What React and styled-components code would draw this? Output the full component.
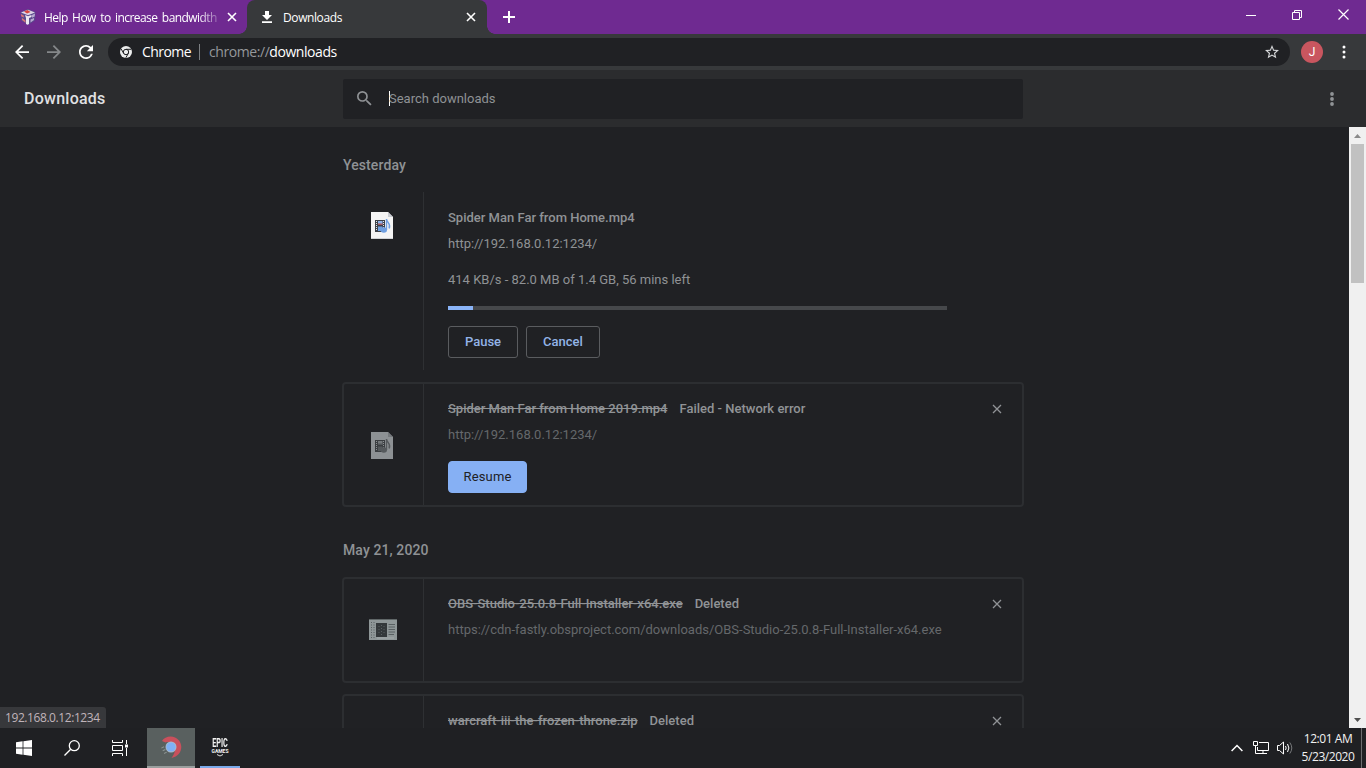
import React from 'react'
import styled, { createGlobalStyle } from 'styled-components'

const GlobalStyle = createGlobalStyle`
  * {
    box-sizing: border-box;
  }
  body {
    margin: 0;
    overflow: hidden;
    background: #202124;
    font-family: Roboto, "Liberation Sans", sans-serif;
  }
  button {
    font-family: inherit;
    padding: 0;
    border: none;
    background: none;
  }
  svg {
    display: block;
    flex-shrink: 0;
  }
`

const Screen = styled.div`
  width: 1366px;
  height: 768px;
  display: flex;
  flex-direction: column;
  overflow: hidden;
`

/* ---- window ---- */

const TabStrip = styled.div`
  height: 34px;
  flex-shrink: 0;
  display: flex;
  background: #6f2a91;
  font-family: "Open Sans", "Noto Sans", sans-serif;
  font-size: 12px;
  color: #fff;
`
const Tab = styled.div`
  position: relative;
  width: ${p => p.$width}px;
  padding: 0 9px 0 ${p => p.$left}px;
  display: flex;
  align-items: center;
  background: ${p => (p.$active ? '#37393b' : 'transparent')};
  border-radius: 8px 8px 0 0;
  ${p => p.$active && `
    &::before, &::after {
      content: '';
      position: absolute;
      bottom: 0;
      width: 8px;
      height: 8px;
    }
    &::before {
      left: -8px;
      background: radial-gradient(circle at 0 0, transparent 7.5px, #37393b 8px);
    }
    &::after {
      right: -8px;
      background: radial-gradient(circle at 100% 0, transparent 7.5px, #37393b 8px);
    }
  `}
`
const TabTitle = styled.span`
  width: ${p => p.$width}px;
  margin-left: ${p => p.$gap}px;
  margin-right: auto;
  white-space: nowrap;
  letter-spacing: ${p => p.$spacing || 0}px;
  ${p => p.$fade && `
    word-spacing: 1.8px;
    mask-image: linear-gradient(90deg, #000 88%, rgba(0, 0, 0, 0.2));
  `}
`
const IconButton = styled.button`
  width: ${p => p.$size || 16}px;
  height: ${p => p.$size || 16}px;
  display: flex;
  align-items: center;
  justify-content: center;
  color: ${p => p.$color || '#fff'};
`
const NewTab = styled(IconButton)`
  margin: 9px 0 0 14px;
`
const WindowButtons = styled.div`
  margin-left: auto;
  height: 29px;
  display: flex;
`
const WindowButton = styled.button`
  width: 46px;
  display: flex;
  align-items: center;
  justify-content: center;
`

const Toolbar = styled.div`
  height: 36px;
  flex-shrink: 0;
  display: flex;
  align-items: center;
  padding: 0 13px 0 15px;
  background: #37393b;
`
const NavButtons = styled.div`
  display: flex;
  gap: 18px;
`
const Omnibox = styled.div`
  width: 1182px;
  height: 28px;
  flex-shrink: 0;
  margin-left: 15px;
  padding: 0 11px 0 12px;
  display: flex;
  align-items: center;
  background: #202124;
  border-radius: 14px;
  color: #fff;
  font-family: "Open Sans", "Noto Sans", sans-serif;
  font-size: 14px;
  line-height: 20px;
`
const SiteName = styled.span`
  margin-left: 10px;
  letter-spacing: -0.55px;
`
const SiteDivider = styled.span`
  width: 1px;
  height: 16px;
  margin: 0 9px 0 8px;
  background: #7d8083;
`
const Url = styled.span`
  margin-right: auto;
  letter-spacing: -0.44px;
  em {
    font-style: normal;
    color: #95989b;
  }
`
const Avatar = styled.div`
  width: 22px;
  height: 22px;
  flex-shrink: 0;
  margin: 0 13px 0 11px;
  display: flex;
  align-items: center;
  justify-content: center;
  border-radius: 50%;
  background: #c9565f;
  color: #fff;
  font-size: 12px;
`

/* ---- downloads page ---- */

const PageHeader = styled.header`
  height: 57px;
  flex-shrink: 0;
  display: flex;
  align-items: center;
  background: #2b2c2e;
`
const PageTitle = styled.h1`
  width: 343px;
  margin: 0;
  padding-left: 24px;
  font-size: 16px;
  font-weight: 500;
  letter-spacing: 0.25px;
  color: #e0e1e3;
`
const SearchField = styled.div`
  width: 680px;
  height: 40px;
  margin-right: auto;
  padding-left: 14px;
  display: flex;
  align-items: center;
  border-radius: 2px;
  background: #202124;
  color: #8f9295;
  font-size: 13px;
`
const Caret = styled.span`
  width: 1px;
  height: 15px;
  margin-left: 17px;
  margin-right: -1px;
  background: #fff;
`
const MenuButton = styled(IconButton)`
  margin-right: 26px;
`

const PageBody = styled.div`
  position: relative;
  height: 601px;
  flex-shrink: 0;
  display: flex;
  justify-content: space-between;
  overflow: hidden;
  background: #202124;
`
const List = styled.main`
  width: 682px;
  margin-left: 342px;
`
const DateHeading = styled.h2`
  margin: ${p => p.$top}px 0 17px 1px;
  font-size: 14px;
  font-weight: 500;
  line-height: 20px;
  letter-spacing: 0.1px;
  color: #8f9295;
`
const Card = styled.section`
  height: ${p => p.$height}px;
  margin-bottom: ${p => p.$gap || 0}px;
  display: flex;
  border: ${p => (p.$plain ? '0 solid transparent' : '2px solid #2c2e31')};
  border-left-width: 2px;
  border-radius: 4px;
`
const IconCell = styled.div`
  width: 80px;
  display: flex;
  align-items: ${p => (p.$top ? 'flex-start' : 'center')};
  justify-content: center;
  padding: ${p => p.$top || 0}px ${p => p.$right || 3}px 0 0;
  border-right: 1px solid #2e3033;
`
const Details = styled.div`
  flex: 1;
  padding: ${p => p.$top || 15}px 16px 0 24px;
  font-size: 13px;
  line-height: 20px;
  color: #8f9295;
`
const TitleRow = styled.div`
  height: 20px;
  display: flex;
  align-items: center;
  font-weight: 500;
  color: #909396;
`
const FileName = styled.span`
  text-decoration: ${p => (p.$gone ? 'line-through' : 'none')};
`
const Tag = styled.span`
  margin-left: 12px;
`
const Remove = styled(IconButton)`
  margin-left: auto;
`
const Line = styled.div`
  margin-top: ${p => p.$top || 6}px;
  color: ${p => (p.$dim ? '#65686b' : '#8f9295')};
`
const Progress = styled.div`
  width: 499px;
  height: 4px;
  margin-top: 16px;
  background: #46484b;
`
const ProgressFill = styled.div`
  height: 4px;
  background: #8ab4f8;
`
const Actions = styled.div`
  display: flex;
  gap: 8px;
  margin-top: 16px;
`
const ActionButton = styled.button`
  width: ${p => p.$width}px;
  height: 32px;
  padding-bottom: 2px;
  border: 1px solid ${p => (p.$filled ? '#86b0f4' : '#5a5c5f')};
  border-radius: ${p => (p.$filled ? 4 : 3)}px;
  background: ${p => (p.$filled ? '#86b0f4' : 'transparent')};
  color: ${p => (p.$filled ? '#202124' : '#93b4e8')};
  font-size: 13px;
  font-weight: ${p => (p.$filled ? 400 : 500)};
  letter-spacing: ${p => (p.$filled ? 0.15 : 0)}px;
`

const Scrollbar = styled.div`
  width: 17px;
  display: flex;
  flex-direction: column;
  align-items: center;
  background: #f0f0f0;
`
const ScrollArrow = styled.div`
  height: 17px;
  display: flex;
  align-items: center;
`
const Thumb = styled.div`
  width: 13px;
  height: 139px;
  margin-bottom: auto;
  background: #c1c1c1;
`
const StatusBubble = styled.div`
  position: absolute;
  left: 0;
  bottom: 0;
  width: 106px;
  height: 21px;
  padding-left: 5px;
  background: #37383b;
  border-radius: 0 3px 0 0;
  color: #c0b4ba;
  font-family: "Open Sans", "Noto Sans", sans-serif;
  font-size: 12px;
  line-height: 21px;
  letter-spacing: -0.42px;
`

/* ---- taskbar ---- */

const Taskbar = styled.footer`
  height: 40px;
  flex-shrink: 0;
  display: flex;
  background: #1f2023;
  color: #f2f2f2;
`
const TaskItem = styled.div`
  width: ${p => p.$width || 48}px;
  height: 40px;
  margin-left: ${p => p.$gap || 0}px;
  display: flex;
  flex-direction: column;
  align-items: center;
  justify-content: center;
  background: ${p => (p.$active ? '#59605f' : 'transparent')};
  border-bottom: ${p => (p.$bar ? `2px solid ${p.$bar}` : 'none')};
`
const EpicName = styled.span`
  font-size: 13px;
  font-weight: 700;
  line-height: 11px;
  transform: scaleX(0.56);
`
const EpicGames = styled.span`
  font-size: 5px;
  font-weight: 700;
  line-height: 6px;
`
const Tray = styled.div`
  margin-left: auto;
  display: flex;
  align-items: center;
`
const Clock = styled.div`
  width: 58px;
  height: 40px;
  margin: 0 4px 0 5px;
  padding-top: 2px;
  font-family: "Open Sans", "Noto Sans", sans-serif;
  font-size: 12px;
  line-height: 18px;
  letter-spacing: -0.45px;
  text-align: center;
  white-space: nowrap;
`
const ShowDesktop = styled.div`
  width: 5px;
  height: 40px;
  border-left: 1px solid #6c6d6f;
`

const Close = ({ size = 10, width = 1.6 }) => (
  <svg width={size} height={size} viewBox="0 0 10 10" stroke="currentColor" strokeWidth={width}>
    <path d="M1 1l8 8M9 1L1 9" />
  </svg>
)

const Dots = ({ r = 1.5, gap = 5 }) => (
  <svg width="16" height="16" viewBox="0 0 16 16" fill="currentColor">
    <circle cx="8" cy={8 - gap} r={r} />
    <circle cx="8" cy="8" r={r} />
    <circle cx="8" cy={8 + gap} r={r} />
  </svg>
)

const Nav = ({ d, color = '#fff' }) => (
  <svg width="14" height="14" viewBox="4 4 16 16" fill={color}>
    <path d={d} />
  </svg>
)

const Favicon = () => (
  <svg width="16" height="16" viewBox="0 0 16 16">
    <path d="M8 0l7.5 3L15 11.5 8 16 1 11.500.5 3z" fill="#5b4a8c" />
    <path d="M1 3.500l7-2.800 7 2.800-7 2.800z" fill="#ded4e6" />
    <path d="M4 2.500l3.500-1.500 3 2L7 4.500z" fill="#d6453f" />
    <path d="M.8 5l3 1.500v2l-2.500-1zM2 9l3.500 2.500v2.300L2 11z" fill="#d9737a" />
    <path d="M5 6l3 1.200L11.500 6v2L9 9v6l-1.500.8L6 15V9z" fill="#eee8f2" />
    <path d="M12 6l3-1.500-.3 3-2.700 1.200zM10.500 10.500L14 9v2l-3.500 2.400z" fill="#b8a8d2" />
  </svg>
)

const ChromeMark = () => (
  <svg width="12" height="12" viewBox="0 0 12 12">
    <circle cx="6" cy="6" r="6" fill="#eceded" />
    <circle cx="6" cy="6" r="2.700" fill="none" stroke="#202124" strokeWidth="1" />
    <path d="M6 3.300h5.200M3.660 7.350L1.100 2.900M8.340 7.350L5.800 11.800" stroke="#202124" strokeWidth="1" />
  </svg>
)

const VideoFile = ({ faded }) => {
  const ink = faded ? '#3b3e41' : '#3d4148'
  const accent = faded ? '#55595c' : '#6f9fe0'
  return (
    <svg width="22" height="27" viewBox="0 0 22 27">
      <path d="M0 0h17l5 5v22H0z" fill={faded ? '#8d9194' : '#f4f4f4'} />
      <path d="M17 0l5 5h-5z" fill={faded ? '#75797c' : '#c9ccd2'} />
      {!faded && <path d="M0 26.500h22" stroke="#d0d2d4" />}
      <path d="M4 8h10v12H4z" fill={ink} />
      <path d="M5.500 9v10M12.500 9v10" stroke={faded ? '#8d9194' : '#e8e8e8'} strokeDasharray="1 1" />
      <path d="M7 9h4.500v4H7z" fill={faded ? '#74787b' : '#8fb1e6'} />
      <path d="M7 11.500h4.500V13H7z" fill={faded ? '#53575a' : '#a8595f'} />
      <path d="M7 14.500h4.500V19H7z" fill={accent} />
      <ellipse cx="12.800" cy="18" rx="3.200" ry="2.800" fill={accent} />
      <path d="M15.500 18V7c0 3.500 5 4.500 2.600 9.500" fill="none" stroke={accent} strokeWidth="1.400" />
    </svg>
  )
}

const ExeFile = () => (
  <svg width="28" height="21" viewBox="0 0 28 21">
    <path d="M0 0h28v21H0z" fill="#8f9798" />
    <path d="M0 .5h28" stroke="#606768" />
    <path d="M7 4h11v14H7z" fill="#34393b" />
    <path d="M2.500 3v16M5 3v16" stroke="#596062" strokeDasharray="1 1.500" />
    <path d="M19.500 5.500H26M19.500 8H26M19.500 10.500H26M19.500 13H26M19.500 15.500H25" stroke="#596062" />
    <path d="M10 7v9M12.500 6v10M15 7v9" stroke="#596062" strokeDasharray="1 2" />
    <path d="M8 19h17" stroke="#a4abac" />
  </svg>
)

const RemoveButton = () => (
  <Remove $size={18} $color="#909396"><Close size={10} width={1.3} /></Remove>
)

const Arrow = ({ down, color }) => (
  <svg width="7" height="4" viewBox="0 0 7 4" fill={color}>
    <path d={down ? 'M0 0h7L3.500 4z' : 'M0 4h7L3.500 0z'} />
  </svg>
)

const Browser = () => (
  <>
    <TabStrip>
      <Tab $width={247} $left={20}>
        <Favicon />
        <TabTitle $width={175} $gap={8} $spacing={-0.55} $fade>Help How to increase bandwidth</TabTitle>
        <IconButton $size={12}><Close /></IconButton>
      </Tab>
      <Tab $active $width={240} $left={14}>
        <svg width="12" height="12" viewBox="0 0 12 12" fill="#fff">
          <path d="M4 0h4v4h3L6 9 1 4h3zM1 10.300h10V12H1z" />
        </svg>
        <TabTitle $width={80} $gap={10} $spacing={-0.4}>Downloads</TabTitle>
        <IconButton $size={14}><Close /></IconButton>
      </Tab>
      <NewTab>
        <svg width="12" height="12" viewBox="0 0 12 12" stroke="#fff" strokeWidth="2"><path d="M6 0v12M0 6h12" /></svg>
      </NewTab>
      <WindowButtons>
        <WindowButton>
          <svg width="10" height="10" viewBox="0 0 10 10" stroke="#fff"><path d="M0 5.500h10" /></svg>
        </WindowButton>
        <WindowButton>
          <svg width="10" height="10" viewBox="0 0 10 10" stroke="#fff" fill="none">
            <path d="M.5 2.500h7v7h-7zM2.500 2.500v-2h7v7h-2" />
          </svg>
        </WindowButton>
        <WindowButton>
          <svg width="11" height="11" viewBox="0 0 11 11" stroke="#fff" strokeWidth="1.200"><path d="M.5.5l10 10M10.500.5l-10 10" /></svg>
        </WindowButton>
      </WindowButtons>
    </TabStrip>
    <Toolbar>
      <NavButtons>
        <Nav d="M20 11H7.830l5.590-5.590L12 4l-8 8 8 8 1.410-1.410L7.830 13H20v-2z" />
        <Nav color="#85888a" d="M12 4l-1.410 1.410L16.170 11H4v2h12.170l-5.580 5.590L12 20l8-8z" />
        <Nav d="M17.650 6.350A7.958 7.958 0 0012 4c-4.420 0-7.990 3.580-7.990 8s3.570 8 7.990 8c3.730 0 6.840-2.550 7.730-6h-2.080A5.990 5.990 0 0112 18c-3.310 0-6-2.690-6-6s2.690-6 6-6c1.660 0 3.140.69 4.220 1.780L13 11h7V4l-2.350 2.350z" />
      </NavButtons>
      <Omnibox>
        <ChromeMark />
        <SiteName>Chrome</SiteName>
        <SiteDivider />
        <Url><em>chrome://</em>downloads</Url>
        <svg width="14" height="14" viewBox="2 2 20 20" fill="#d5d7d9">
          <path d="M22 9.240l-7.190-.62L12 2 9.190 8.630 2 9.240l5.460 4.730L5.820 21 12 17.270 18.180 21l-1.630-7.030L22 9.240zM12 15.400l-3.760 2.270 1-4.280-3.320-2.880 4.380-.38L12 6.100l1.710 4.040 4.380.38-3.320 2.880 1 4.280L12 15.400z" />
        </svg>
      </Omnibox>
      <Avatar>J</Avatar>
      <IconButton><Dots /></IconButton>
    </Toolbar>
  </>
)

const Downloads = () => (
  <>
    <PageHeader>
      <PageTitle>Downloads</PageTitle>
      <SearchField>
        <svg width="15" height="15" viewBox="3 3 18 18" fill="#8f9295">
          <path d="M15.500 14h-.79l-.28-.27A6.471 6.471 0 0016 9.500 6.500 6.500 0 109.500 16c1.610 0 3.090-.59 4.230-1.570l.27.28v.79l5 4.990L20.490 19l-4.990-5zm-6 0C7.010 14 5 11.990 5 9.500S7.010 5 9.500 5 14 7.010 14 9.500 11.990 14 9.500 14z" />
        </svg>
        <Caret />
        Search downloads
      </SearchField>
      <MenuButton $color="#909396"><Dots r={1.9} /></MenuButton>
    </PageHeader>
    <PageBody>
      <List>
        <DateHeading $top={28}>Yesterday</DateHeading>
        <Card $plain $height={178} $gap={12}>
          <IconCell $top={20}><VideoFile /></IconCell>
          <Details $top={16}>
            <TitleRow><FileName>Spider Man Far from Home.mp4</FileName></TitleRow>
            <Line>http://192.168.0.12:1234/</Line>
            <Line $top={16}>414 KB/s - 82.0 MB of 1.4 GB, 56 mins left</Line>
            <Progress><ProgressFill style={{ width: '5%' }} /></Progress>
            <Actions>
              <ActionButton $width={70}>Pause</ActionButton>
              <ActionButton $width={74}>Cancel</ActionButton>
            </Actions>
          </Details>
        </Card>
        <Card $height={125}>
          <IconCell $top={48}><VideoFile faded /></IconCell>
          <Details>
            <TitleRow>
              <FileName $gone>Spider Man Far from Home 2019.mp4</FileName>
              <Tag>Failed - Network error</Tag>
              <RemoveButton />
            </TitleRow>
            <Line $dim>http://192.168.0.12:1234/</Line>
            <Actions>
              <ActionButton $filled $width={79}>Resume</ActionButton>
            </Actions>
          </Details>
        </Card>
        <DateHeading $top={33}>May 21, 2020</DateHeading>
        <Card $height={106} $gap={11}>
          <IconCell $top={40} $right={1}><ExeFile /></IconCell>
          <Details>
            <TitleRow>
              <FileName $gone>OBS-Studio-25.0.8-Full-Installer-x64.exe</FileName>
              <Tag>Deleted</Tag>
              <RemoveButton />
            </TitleRow>
            <Line $dim>https://cdn-fastly.obsproject.com/downloads/OBS-Studio-25.0.8-Full-Installer-x64.exe</Line>
          </Details>
        </Card>
        <Card $height={106}>
          <IconCell />
          <Details>
            <TitleRow>
              <FileName $gone>warcraft-iii-the-frozen-throne.zip</FileName>
              <Tag>Deleted</Tag>
              <RemoveButton />
            </TitleRow>
          </Details>
        </Card>
      </List>
      <Scrollbar>
        <ScrollArrow><Arrow color="#8a8a8a" /></ScrollArrow>
        <Thumb />
        <ScrollArrow><Arrow down color="#505050" /></ScrollArrow>
      </Scrollbar>
      <StatusBubble>192.168.0.12:1234</StatusBubble>
    </PageBody>
  </>
)

const WindowsTaskbar = () => (
  <Taskbar>
    <TaskItem>
      <svg width="16" height="16" viewBox="0 0 16 16" fill="#fff">
        <path d="M0 2.200L6.600 1.300v6.300H0zM7.400 1.200L16 0v7.600H7.400zM0 8.400h6.600v6.300L0 13.800zM7.400 8.400H16V16l-8.600-1.200z" />
      </svg>
    </TaskItem>
    <TaskItem>
      <svg width="16" height="16" viewBox="0 0 16 16" fill="none" stroke="#fff" strokeWidth="1.300">
        <circle cx="10.300" cy="5.700" r="5" />
        <path d="M6.700 9.300L.5 15.500" />
      </svg>
    </TaskItem>
    <TaskItem>
      <svg width="16" height="16" viewBox="0 0 16 16" fill="none" stroke="#fff">
        <path d="M.5 0v2.500h10V0M.5 5.500h10v5H.5zM.5 16v-2.500h10V16M14.500 0v4M14.500 8v8" />
        <path d="M13 4.500h3v3h-3z" fill="#fff" stroke="none" />
      </svg>
    </TaskItem>
    <TaskItem $active $gap={3} $bar="#9a9f9e">
      <svg width="24" height="24" viewBox="0 0 24 24">
        <path d="M3 6C6 1 15-.5 20 5.500c5 6.500 1.500 16-7.500 17.500 3-4 4-7 3-11-1-4-5-6-9-4.500z" fill="#c9505c" />
        <circle cx="12" cy="12" r="5.500" fill="#a9b9c9" />
        <circle cx="12" cy="12" r="4.600" fill="#7fb0f5" />
        <path d="M3.500 12l4 8" stroke="#8b9391" strokeWidth="3" strokeDasharray="1 2" />
      </svg>
    </TaskItem>
    <TaskItem $width={40} $gap={5} $bar="#7aa9ea">
      <EpicName>EPIC</EpicName>
      <EpicGames>GAMES</EpicGames>
      <svg width="6" height="3" viewBox="0 0 6 3" fill="none" stroke="#ddd"><path d="M0 .5l3 1.500 3-1.500" /></svg>
    </TaskItem>
    <Tray>
      <svg width="12" height="8" viewBox="0 0 12 8" fill="none" stroke="#fff" strokeWidth="1.500"><path d="M.6 7L6 1.500 11.400 7" /></svg>
      <svg width="32" height="16" viewBox="-10 0 32 16" fill="none" stroke="#fff">
        <path d="M6 2.500h9.500v8H4.500V7M10 10.500v3M5 13.500h9M.5 1.500h4v4h-4zM2.500 5.500v8H5" />
      </svg>
      <svg width="19" height="16" viewBox="-2 0 19 16" fill="none" stroke="#fff">
        <path d="M.5 5.500h2L6.500 2v12l-4-3.500h-2zM8.500 6q1.300 2 0 4M10.500 4q2.800 4 0 8" />
        <path d="M12.800 2.500q4 5.500 0 11" stroke="#77797b" />
      </svg>
      <Clock>
        <div>12:01 AM</div>
        <div>5/23/2020</div>
      </Clock>
      <ShowDesktop />
    </Tray>
  </Taskbar>
)

export default function App() {
  return (
    <Screen>
      <GlobalStyle />
      <Browser />
      <Downloads />
      <WindowsTaskbar />
    </Screen>
  )
}
